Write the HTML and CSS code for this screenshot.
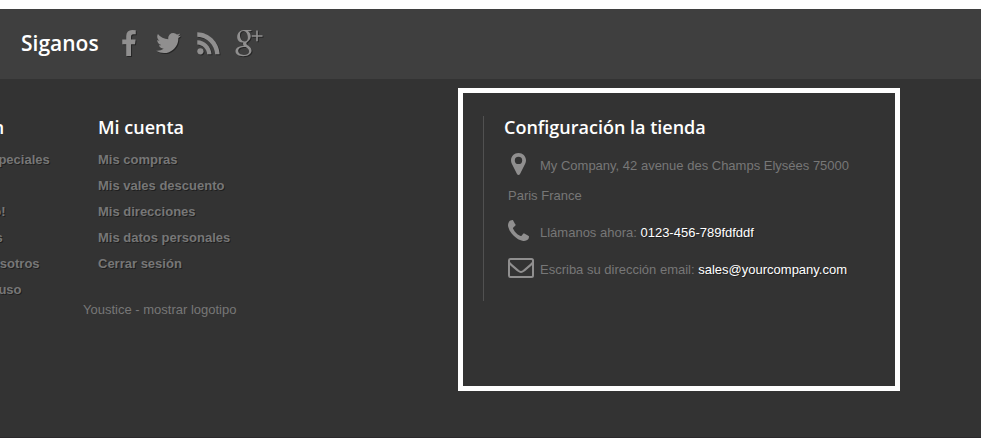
FILE: index.html
```html
<!DOCTYPE html>
<html lang="es">
<head>
    <meta charset="UTF-8">
    <meta name="viewport" content="width=device-width, initial-scale=1.0">
    <title>Mi tienda</title>
    <link rel="stylesheet" href="styles.css">
</head>
<body>
    <footer class="footer">
        <section class="social">
            <h2 class="social-title">Siganos</h2>
            <ul class="social-links">
                <li><a href="#" aria-label="Facebook">
                    <svg width="14" height="26" viewBox="479 0 864 1664"><path d="M1343 12v264h-157q-86 0-116 36t-30 108v189h293l-39 296h-254v759h-306v-759h-255v-296h255v-218q0-186 104-288.500t277-102.500q147 0 228 12z"/></svg>
                </a></li>
                <li><a href="#" aria-label="Twitter">
                    <svg width="25" height="20" viewBox="108 256 1576 1280"><path d="M1684 408q-67 98-162 167 1 14 1 42 0 130-38 259.500t-115.500 248.500-184.500 210.500-258 146-323 54.500q-271 0-496-145 35 4 78 4 225 0 401-138-105-2-188-64.500t-114-159.500q33 5 61 5 43 0 85-11-112-23-185.500-111.500t-73.500-205.500v-4q68 38 146 41-66-44-105-115t-39-154q0-88 44-163 121 149 294.500 238.500t371.500 99.500q-8-38-8-74 0-134 94.500-228.500t228.500-94.500q140 0 236 102 109-21 205-78-37 115-142 178 93-10 186-50z"/></svg>
                </a></li>
                <li><a href="#" aria-label="RSS">
                    <svg width="23" height="23" viewBox="0 0 23 23"><circle cx="3.400" cy="19.300" r="3.100"/><path d="M.3 8.200C8 8.400 14.200 14.600 14.500 22.300H10.200C9.900 17 5.600 12.800.3 12.500zM.3.300C12.400.600 22.200 10.300 22.600 22.300H18.200C17.800 12.800 9.900 5.100.3 4.700z"/></svg>
                </a></li>
                <li><a href="#" aria-label="Google+">
                    <svg width="28" height="28" viewBox="0 0 28 28"><path fill-rule="evenodd" d="M9 1H17L15.300 2.300H12.900C14.900 3.500 15.700 5.200 15.700 7.200C15.700 9.500 14.500 11 13 12.200C11.700 13.200 11.300 13.700 11.300 14.400C11.300 15.300 12.300 15.900 13.400 16.800C15.500 18.300 16.500 19.800 16.500 21.600C16.500 24.900 13.200 27.200 8.100 27.200C3.500 27.200.500 25.300.500 22.300C.500 19 4 17 8.900 16.800C8 15.900 7.800 14.800 8.300 13.600C4.700 13.900 2.200 11.300 2.200 7.900C2.200 4.200 5.100 1 9 1zM8.200 2.100C6.100 2.100 5 3.700 5 6C5 9.300 6.700 12.500 9.500 12.500C11.700 12.500 12.900 10.900 12.900 8.700C12.900 5.300 11.200 2.100 8.200 2.100zM9.800 17.900C5.500 17.900 3.200 19.400 3.200 21.800C3.200 24.200 5.400 25.900 8.900 25.900C12.200 25.900 14.100 24.600 14.100 22.400C14.100 20.500 12.700 19.600 10.800 18.100z"/><path d="M21.200 1.500H22.800V6.200H27.500V7.700H22.800V12.300H21.200V7.700H16.700V6.200H21.200z"/></svg>
                </a></li>
            </ul>
        </section>

        <div class="columns">
            <section class="block">
                <h3>Información</h3>
                <ul class="links">
                    <li><a href="#">Promociones especiales</a></li>
                    <li><a href="#">Novedades</a></li>
                    <li><a href="#">¡Lo más vendido!</a></li>
                    <li><a href="#">Nuestras tiendas</a></li>
                    <li><a href="#">Contacte con nosotros</a></li>
                    <li><a href="#">Condiciones de uso</a></li>
                </ul>
            </section>

            <div class="account">
                <section class="block">
                    <h3>Mi cuenta</h3>
                    <ul class="links">
                        <li><a href="#">Mis compras</a></li>
                        <li><a href="#">Mis vales descuento</a></li>
                        <li><a href="#">Mis direcciones</a></li>
                        <li><a href="#">Mis datos personales</a></li>
                        <li><a href="#">Cerrar sesión</a></li>
                    </ul>
                </section>
                <a class="youstice" href="#">Youstice - mostrar logotipo</a>
            </div>

            <section class="store">
                <div class="store-info">
                    <h3>Configuración la tienda</h3>
                    <ul class="contact">
                        <li>
                            <span class="icon"><svg width="21" height="22" viewBox="0 0 21 22"><path fill-rule="evenodd" d="M10.500 0C14.700 0 18 3.200 18 7.300C18 8.600 17.700 9.600 17.300 10.500L12 20.900C11.300 22.300 9.700 22.300 9 20.900L3.700 10.500C3.300 9.600 3 8.600 3 7.300C3 3.200 6.300 0 10.500 0zM10.500 3.700A3.700 3.700 0 1 0 10.500 11.100A3.700 3.700 0 1 0 10.500 3.700z"/></svg></span>My Company, 42 avenue des Champs Elysées 75000 Paris France
                        </li>
                        <li>
                            <span class="icon"><svg width="21" height="21" viewBox="192 128 1408 1408"><path d="M1600 1240q0 27-10 70.500t-21 68.500q-21 50-122 106-94 51-186 51-27 0-52.500-3.500t-57.500-12.500-47.500-14.500-55.500-20.500-49-18q-98-35-175-83-128-79-264.500-215.500t-215.500-264.500q-48-77-83-175-3-9-18-49t-20.500-55.500-14.500-47.500-12.500-57.500-3.500-52.500q0-92 51-186 56-101 106-122 25-11 68.500-21t70.500-10q14 0 21 3 18 6 53 76 11 19 30 54t35 63.500 31 53.500q3 4 17.500 25t21.500 35.500 7 28.500q0 20-28.500 50t-62 55-62 53-28.500 46q0 9 5 22.500t8.500 20.500 14 24 11.500 19q76 137 174 235t235 174q2 1 19 11.500t24 14 20.500 8.500 22.500 5q18 0 46-28.500t53-62 55-62 50-28.500q14 0 28.500 7t35.500 21.500 25 17.500q25 15 53.500 31t63.500 35 54 30q70 35 76 53 3 7 3 21z"/></svg></span>Llámanos ahora: <span class="value">0123-456-789fdfddf</span>
                        </li>
                        <li>
                            <span class="icon"><svg class="outline" width="26" height="20" viewBox="0 0 26 20"><rect x="1" y="1" width="24" height="18" rx="1.500"/><path d="M1 4.500C4 8 7.500 10.300 10.300 12.800C12.200 14.400 13.800 14.400 15.700 12.800C18.500 10.300 22 8 25 4.500"/></svg></span>Escriba su dirección email: <a class="value" href="mailto:sales@yourcompany.com">sales@yourcompany.com</a>
                        </li>
                    </ul>
                </div>
            </section>
        </div>
    </footer>
</body>
</html>
```

FILE: styles.css
```css
* {
    box-sizing: border-box;
}

body {
    margin: 0;
    padding-top: 9px;
    min-height: 100vh;
    display: flex;
    flex-direction: column;
    background-color: #fff;
    color: #777;
    font-family: "Liberation Sans", Arial, sans-serif;
    font-size: 13px;
    line-height: 18px;
}

h2,
h3,
ul {
    margin: 0;
    padding: 0;
}

ul {
    list-style: none;
}

a {
    color: inherit;
    text-decoration: none;
}

a:hover {
    color: #fff;
}

svg {
    display: block;
    fill: #908f8f;
}

.footer {
    flex: 1;
    background-color: #333;
    border-bottom: 1px solid #2b292b;
    overflow: hidden;
}

/* social bar */
.social {
    display: flex;
    align-items: center;
    gap: 16px;
    height: 70px;
    padding: 0 21px 2px;
    background-color: #3f3f3f;
}

.social-title {
    color: #fff;
    font: 600 21px/24px "Open Sans", sans-serif;
}

.social-links {
    display: flex;
    gap: 12px;
}

.social-links a {
    display: flex;
    align-items: center;
    justify-content: center;
    width: 28px;
    height: 28px;
    filter: drop-shadow(1px 1px 0 rgba(0, 0, 0, 0.4));
}

/* columns, the first one starts outside the window */
.columns {
    display: grid;
    grid-template-columns: 185px 375px 1fr;
    align-items: start;
    margin-left: -102px;
    padding: 9px 81px 40px 0;
}

h3 {
    color: #fff;
    font: 600 18px/22px "Open Sans", sans-serif;
}

.block {
    padding-top: 28px;
}

.account .block {
    padding-left: 15px;
}

.links {
    padding-top: 9px;
    font-weight: bold;
    text-shadow: 1px 1px 0 rgba(0, 0, 0, 0.4);
}

.links li {
    padding: 4px 0;
}

.youstice {
    display: block;
    margin-top: 24px;
}

.store {
    min-height: 303px;
    padding: 23px 20px;
    border: 5px solid #fff;
}

.store-info {
    min-height: 185px;
    padding-left: 20px;
    border-left: 1px solid #515151;
}

.contact {
    padding: 13px 0 0 4px;
    line-height: 30px;
}

.contact li {
    padding-bottom: 7px;
}

.icon {
    display: inline-flex;
    align-items: center;
    width: 32px;
    height: 24px;
    margin-top: -6px;
    vertical-align: middle;
}

.outline {
    fill: none;
    stroke: #908f8f;
    stroke-width: 2;
}

.value {
    color: #fff;
    text-shadow: 1px 1px 0 rgba(0, 0, 0, 0.4);
}
```
